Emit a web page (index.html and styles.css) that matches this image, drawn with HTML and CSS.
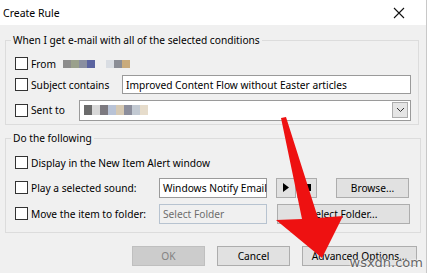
FILE: index.html
```html
<!DOCTYPE html>
<html lang="en">
<head>
    <meta charset="UTF-8">
    <title>Create Rule</title>
    <link rel="stylesheet" href="styles.css">
</head>
<body>
    <div class="window">
        <div class="titlebar">
            <span class="title">Create Rule</span>
            <svg class="close" width="12" height="12" viewBox="0 0 12 12">
                <path d="M1 1 L11 11 M11 1 L1 11" stroke="#111" stroke-width="1.1" fill="none"/>
            </svg>
        </div>

        <div class="content">
            <fieldset class="group group-conditions">
                <legend>When I get e-mail with all of the selected conditions</legend>
                <div class="row row-from">
                    <span class="check"></span>
                    <span class="label">From</span>
                    <span class="blur">
                        <i style="background:#8d8d8d"></i><i style="background:#9aa08c"></i><i style="background:#8a8fa0"></i><i style="background:#5b64a0"></i><i style="background:transparent;width:11px"></i><i style="background:#d9dde3"></i><i style="background:#8a8d96"></i><i style="background:#c9ab7c"></i>
                    </span>
                </div>
                <div class="row row-subject">
                    <span class="check"></span>
                    <span class="label label-subject">Subject contains</span>
                    <div class="textbox wide">Improved Content Flow without Easter articles</div>
                </div>
                <div class="row row-sent">
                    <span class="check"></span>
                    <span class="label label-sent">Sent to</span>
                    <div class="textbox wide combo">
                        <span class="blur blur-sent">
                            <i style="background:#6b6b6b"></i><i style="background:#d8d8d8"></i><i style="background:#7d7a80"></i><i style="background:#b9c3d6"></i><i style="background:#d6c9b3"></i><i style="background:#8c8e9c"></i><i style="background:#c2c9d2"></i><i style="background:#e6dccb"></i>
                        </span>
                        <span class="drop">
                            <svg width="9" height="6" viewBox="0 0 9 6"><path d="M1 1 L4.5 4.5 L8 1" stroke="#333" fill="none"/></svg>
                        </span>
                    </div>
                </div>
            </fieldset>

            <fieldset class="group group-actions">
                <legend>Do the following</legend>
                <div class="row row-display">
                    <span class="check"></span>
                    <span class="label">Display in the New Item Alert window</span>
                </div>
                <div class="row row-sound">
                    <span class="check"></span>
                    <span class="label label-action">Play a selected sound:</span>
                    <div class="textbox field">Windows Notify Email</div>
                    <button class="btn btn-icon">
                        <svg width="6" height="9" viewBox="0 0 6 9"><path d="M0 0 L6 4.5 L0 9 Z" fill="#000"/></svg>
                    </button>
                    <button class="btn btn-icon btn-stop">
                        <svg width="7" height="7" viewBox="0 0 7 7"><rect width="7" height="7" fill="#000"/></svg>
                    </button>
                    <button class="btn btn-browse">Browse...</button>
                </div>
                <div class="row row-move">
                    <span class="check"></span>
                    <span class="label label-action">Move the item to folder:</span>
                    <div class="textbox field disabled">Select Folder</div>
                    <button class="btn btn-folder">Select Folder...</button>
                </div>
            </fieldset>

            <div class="buttons">
                <button class="btn btn-main btn-disabled">OK</button>
                <button class="btn btn-main">Cancel</button>
                <button class="btn btn-advanced">Advanced Options...</button>
            </div>
        </div>

        <svg class="arrow" width="427" height="273" viewBox="0 0 427 273">
            <polygon points="281,118 286,117 318,218 343,216 322,258 276,220 302,219" fill="#ee1111"/>
        </svg>
        <span class="watermark">wsxdn.com</span>
    </div>
</body>
</html>
```

FILE: styles.css
```css
* {
    box-sizing: border-box;
}
body {
    margin: 0;
    width: 427px;
    height: 273px;
    overflow: hidden;
    font-family: "Noto Sans", "Open Sans", sans-serif;
    font-size: 10.2px;
    color: #000;
    background-color: #f0f0f0;
}
.window {
    position: relative;
    width: 427px;
    height: 273px;
    border-right: 1px solid #c8c8c8;
}
.titlebar {
    height: 25px;
    background-color: #fff;
    display: flex;
    align-items: center;
    justify-content: space-between;
    padding: 0 21px 0 3px;
}
.title {
    font-size: 10.5px;
}
.content {
    padding: 7px 7px 0 5px;
}

/* group boxes */
.group {
    margin: 0;
    border: 1px solid #dcdcdc;
    padding: 5px 7px 3px 9px;
}
.group legend {
    padding: 0 2px;
    margin-left: -4px;
    line-height: 16px;
}
.group-actions {
    margin-top: 5px;
    padding: 6px 10px 8px 9px;
}

.row {
    display: flex;
    align-items: center;
    height: 21px;
}
.row-sent {
    margin-top: 4px;
    height: 22px;
}
.row-sound,
.row-move {
    margin-top: 5px;
}
.row-sound {
    margin-top: 4px;
}

.check {
    width: 13px;
    height: 13px;
    border: 1px solid #333;
    background-color: #fff;
    flex: none;
}
.label {
    margin-left: 3px;
    white-space: nowrap;
}
.label-subject {
    width: 91px;
}
.label-sent {
    width: 48px;
}
.label-action {
    width: 128px;
}

.blur {
    display: flex;
    margin-left: 7px;
    height: 8px;
}
.blur i {
    display: block;
    width: 8px;
    height: 8px;
}
.blur-sent {
    margin-left: 2px;
    height: 10px;
}
.blur-sent i {
    height: 10px;
}

.textbox {
    height: 19px;
    border: 1px solid #9a9a9a;
    background-color: #fff;
    padding: 0 3px;
    display: flex;
    align-items: center;
    white-space: nowrap;
}
.wide {
    flex: 1;
}
.combo {
    height: 21px;
    padding: 0 2px 0 2px;
    justify-content: space-between;
}
.drop {
    width: 16px;
    height: 16px;
    border: 1px solid #adadad;
    background-color: #e5e5e5;
    display: flex;
    align-items: center;
    justify-content: center;
}
.field {
    width: 108px;
    height: 20px;
}
.disabled {
    background-color: #f0f0f0;
    border-color: #b7c3d0;
    color: #6d6d6d;
}

/* buttons */
.btn {
    font-family: inherit;
    font-size: 10.2px;
    height: 20px;
    border: 1px solid #adadad;
    background-color: #e1e1e1;
    color: #000;
    padding: 0;
    display: flex;
    align-items: center;
    justify-content: center;
}
.btn-icon {
    width: 20px;
    margin-left: 9px;
}
.btn-stop {
    margin-left: 1px;
}
.btn-browse {
    width: 73px;
    margin-left: 19px;
}
.btn-folder {
    width: 133px;
    margin-left: 10px;
}
.buttons {
    display: flex;
    justify-content: flex-end;
    gap: 12px;
    margin-top: 13px;
    padding-right: 2px;
}
.btn-main {
    width: 73px;
}
.btn-disabled {
    background-color: #cccccc;
    border-color: #bfbfbf;
    color: #838383;
}
.btn-advanced {
    width: 115px;
}

/* overlay */
.arrow {
    position: absolute;
    left: 0;
    top: 0;
}
.watermark {
    position: absolute;
    right: 3px;
    bottom: 3px;
    font-family: "DejaVu Sans", sans-serif;
    font-size: 13px;
    color: #666;
    text-shadow: 0 0 2px #fff, 0 0 2px #fff;
}
```
